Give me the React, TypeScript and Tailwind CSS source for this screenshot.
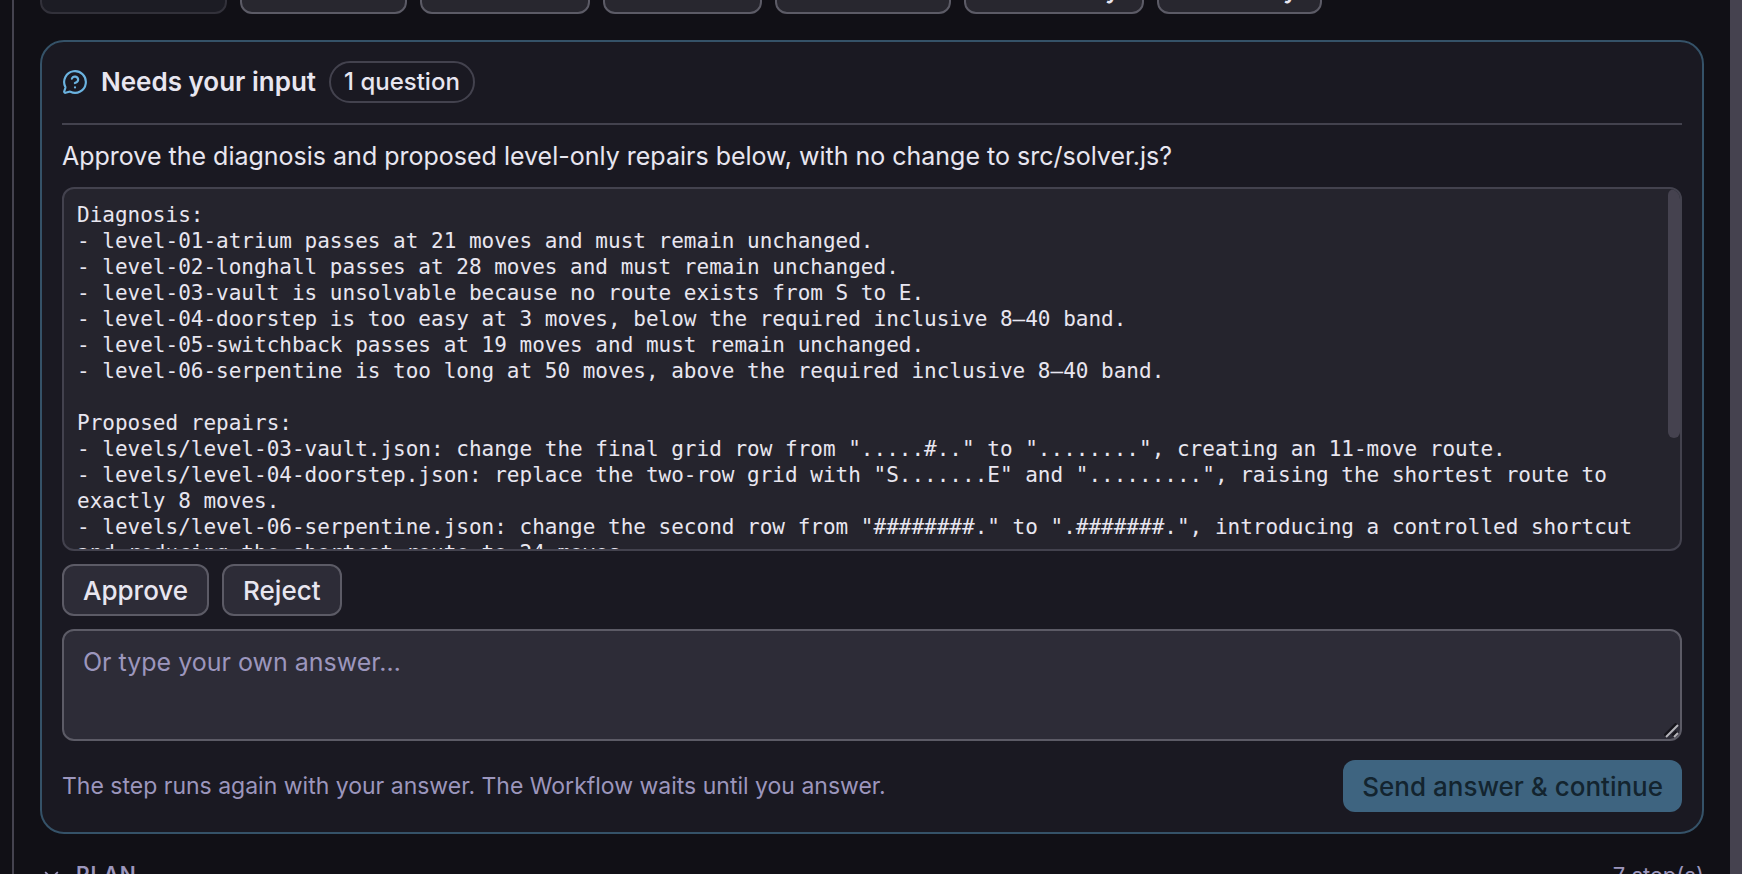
import { useState } from 'react'
import { ChevronDown, MessageCircleQuestionMark } from 'lucide-react'

const details = `Diagnosis:
- level-01-atrium passes at 21 moves and must remain unchanged.
- level-02-longhall passes at 28 moves and must remain unchanged.
- level-03-vault is unsolvable because no route exists from S to E.
- level-04-doorstep is too easy at 3 moves, below the required inclusive 8–40 band.
- level-05-switchback passes at 19 moves and must remain unchanged.
- level-06-serpentine is too long at 50 moves, above the required inclusive 8–40 band.

Proposed repairs:
- levels/level-03-vault.json: change the final grid row from ".....#.." to "........", creating an 11-move route.
- levels/level-04-doorstep.json: replace the two-row grid with "S.......E" and ".........", raising the shortest route to exactly 8 moves.
- levels/level-06-serpentine.json: change the second row from "########." to ".#######.", introducing a controlled shortcut and reducing the shortest route to 24 moves.`

// the toolbar is scrolled almost out of view, only its lower edge shows
const tools = [
  { width: 'w-[187px]', label: '', disabled: true },
  { width: 'w-[167px]', label: '' },
  { width: 'w-[170px]', label: '' },
  { width: 'w-[159px]', label: '' },
  { width: 'w-[176px]', label: '' },
  { width: 'w-[180px]', label: 'y' },
  { width: 'w-[165px]', label: 'y' }
]

function Toolbar() {
  return (
    <div className="flex h-[14px] items-end gap-[13px] overflow-hidden">
      {tools.map((tool, i) => (
        <button
          key={i}
          type="button"
          disabled={tool.disabled}
          aria-label={`Tool ${i + 1}`}
          className={`${tool.width} h-[52px] shrink-0 rounded-xl border-2 border-[#5c5b66] bg-[#28272f] px-[22px] text-right text-[26px] font-medium disabled:border-[#32313a] disabled:bg-[#1c1c24]`}
        >
          {tool.label}
        </button>
      ))}
    </div>
  )
}

export default function App() {
  const [answer, setAnswer] = useState('')

  return (
    <div className="flex h-screen overflow-hidden bg-[#111016] font-['Inter',sans-serif] text-[#e8e6f0]">
      <div className="w-[14px] shrink-0 border-r-2 border-[#45434f]" />
      <main className="min-w-0 flex-1 px-[26px]">
        <Toolbar />

        <section className="mt-[26px] rounded-3xl border-2 border-[#355268] bg-[#1a1922] px-5 pt-[19px] pb-5">
          <header className="flex items-center gap-[13px] border-b-2 border-[#43424e] pb-5">
            <MessageCircleQuestionMark className="size-[26px] text-[#6bb3e0]" strokeWidth={2} />
            <h2 className="text-[26px] leading-8 font-semibold">Needs your input</h2>
            <span className="rounded-full border-2 border-[#43424e] px-[13px] py-[3px] text-[24px] leading-8 font-medium">
              1 question
            </span>
          </header>

          <p className="mt-3 text-[25px] leading-[39px]">
            Approve the diagnosis and proposed level-only repairs below, with no change to src/solver.js?
          </p>

          <div className="mt-[11px] flex h-[364px] overflow-hidden rounded-xl border-2 border-[#43424e] bg-[#25242d]">
            <pre className="min-w-0 flex-1 pt-[13px] pl-[13px] font-['DejaVu_Sans_Mono',monospace] text-[21px] leading-[26px] whitespace-pre-wrap">
              {details}
            </pre>
            <div className="h-[249px] w-3 shrink-0 rounded-full bg-[#45424f]" />
          </div>

          <div className="mt-[13px] flex gap-[13px]">
            <button type="button" className="h-[52px] rounded-xl border-2 border-[#5c5b66] bg-[#2d2c37] px-[19px] text-[26px] font-medium">
              Approve
            </button>
            <button type="button" className="h-[52px] rounded-xl border-2 border-[#5c5b66] bg-[#2d2c37] px-[19px] text-[26px] font-medium">
              Reject
            </button>
          </div>

          <div className="relative mt-[13px]">
            <textarea
              aria-label="Your answer"
              value={answer}
              onChange={(e) => setAnswer(e.target.value)}
              placeholder="Or type your own answer…"
              className="block h-[112px] w-full resize-none rounded-xl border-2 border-[#5c5b66] bg-[#2d2c37] px-[19px] py-3 text-[25px] leading-[39px] placeholder:text-[#9c96bd]"
            />
            <svg viewBox="0 0 16 16" className="pointer-events-none absolute right-[2px] bottom-[2px] size-4" fill="none">
              <path d="M1 13 L13 1 M9 13 L13 9" stroke="#15141b" strokeWidth="4" />
              <path d="M2 14 L14 2 M10 14 L14 10" stroke="#b5b4ba" strokeWidth="2" />
            </svg>
          </div>

          <div className="mt-[19px] flex items-center justify-between">
            <p className="text-[23px] text-[#9c96bd]">
              The step runs again with your answer. The Workflow waits until you answer.
            </p>
            <button type="button" className="h-[52px] rounded-xl bg-[#3e6480] px-[19px] text-[26px] font-medium text-[#13242f]">
              Send answer &amp; continue
            </button>
          </div>
        </section>

        <div className="mt-[26px] flex items-center gap-[13px] text-[#9c96bd]">
          <ChevronDown className="size-[23px]" />
          <h3 className="text-[21px] leading-[30px] font-semibold tracking-wider">PLAN</h3>
          <span className="ml-auto text-[22px] leading-[30px]">7 step(s)</span>
        </div>
      </main>
      <div className="w-3 shrink-0 bg-[#45424f]" />
    </div>
  )
}
